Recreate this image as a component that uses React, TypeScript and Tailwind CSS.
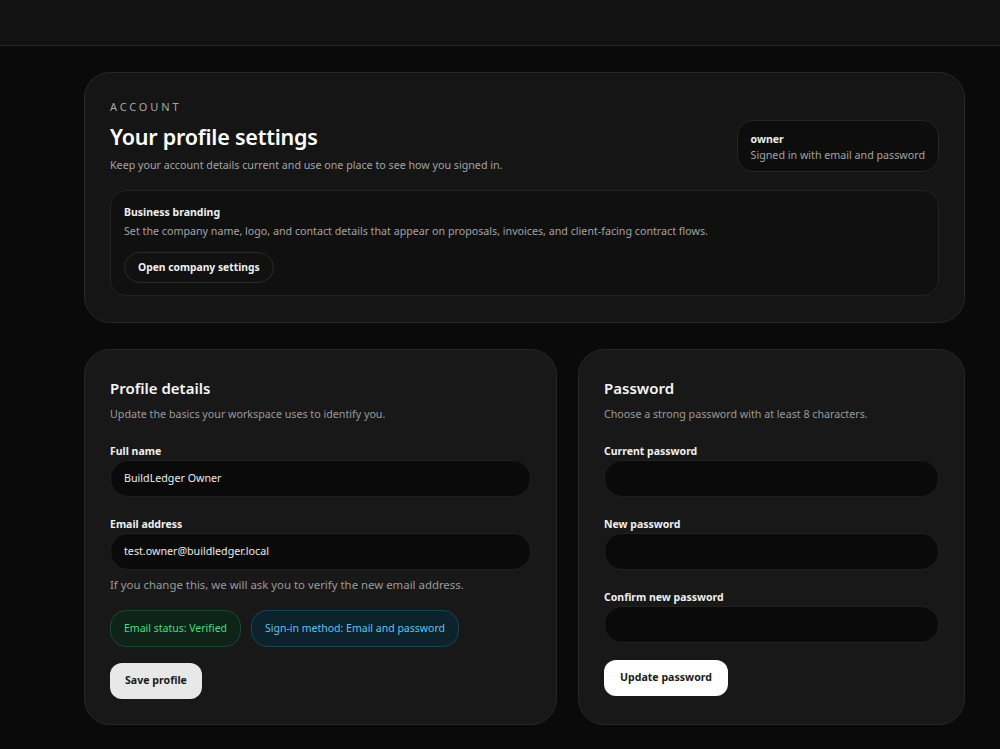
import React from "react";

const font = { fontFamily: '"Noto Sans", "Open Sans", sans-serif' };

function Field({ label, value }: { label: string; value?: string }) {
  return (
    <div className="flex flex-col">
      <label className="text-[10.5px] font-bold text-[#f0f0f0] leading-[14px] mb-[2px]">{label}</label>
      <div className="h-[37px] rounded-[18px] bg-[#0a0a0a] border border-[#202020] flex items-center px-[13px] text-[10.7px] text-[#eaeaea]">
        {value}
      </div>
    </div>
  );
}

export default function App() {
  return (
    <div style={font} className="min-h-[749px] bg-[#0a0a0a] text-white">
      <div className="h-[46px] bg-[#121212] border-b border-[#262626]" />
      <div className="pl-[84px] pr-[35px] pt-[26px] pb-[24px] flex flex-col gap-[26px]">
        <section className="rounded-[26px] bg-[#151515] border border-[#272727] px-[25px] pt-[27px] pb-[26px]">
          <div className="flex justify-between items-start">
            <div>
              <div className="text-[11px] tracking-[0.26em] text-[#a8a8a8] leading-[14px]">ACCOUNT</div>
              <h1 className="text-[21.5px] font-semibold leading-[30px] mt-[8px] tracking-[-0.01em]">Your profile settings</h1>
              <p className="text-[10.7px] text-[#a3a3a3] mt-[5px] leading-[16px]">
                Keep your account details current and use one place to see how you signed in.
              </p>
            </div>
            <div className="mt-[20px] rounded-[16px] bg-[#0d0d0d] border border-[#242424] px-[13px] pt-[11px] pb-[8px]">
              <div className="text-[10.5px] font-bold text-[#eeeeee] leading-[14px]">owner</div>
              <div className="text-[10.7px] text-[#a3a3a3] leading-[16px] mt-[1px]">Signed in with email and password</div>
            </div>
          </div>
          <div className="mt-[17px] rounded-[16px] bg-[#101010] border border-[#232323] px-[13px] pt-[14px] pb-[12px]">
            <div className="text-[10.5px] font-bold text-[#f0f0f0] leading-[14px]">Business branding</div>
            <p className="text-[10.7px] text-[#a3a3a3] mt-[4px] leading-[16px]">
              Set the company name, logo, and contact details that appear on proposals, invoices, and client-facing contract flows.
            </p>
            <button className="mt-[13px] h-[31px] px-[13px] rounded-full border border-[#2a2a2a] bg-[#111111] text-[10.3px] font-bold text-[#f0f0f0]">
              Open company settings
            </button>
          </div>
        </section>

        <div className="grid grid-cols-[11fr_9fr] gap-[21px]">
          <section className="rounded-[26px] bg-[#181818] border border-[#272727] px-[25px] pt-[27px] pb-[25px]">
            <h2 className="text-[15px] font-semibold leading-[22px] text-[#f5f5f5]">Profile details</h2>
            <p className="text-[10.7px] text-[#9a9a9a] mt-[7px] leading-[16px]">Update the basics your workspace uses to identify you.</p>
            <div className="mt-[22px] flex flex-col gap-[20px]">
              <Field label="Full name" value="BuildLedger Owner" />
              <Field label="Email address" value="test.owner@buildledger.local" />
            </div>
            <p className="text-[11.4px] text-[#9a9a9a] mt-[7px] leading-[16px]">If you change this, we will ask you to verify the new email address.</p>
            <div className="flex gap-[10px] mt-[17px]">
              <span className="h-[37px] px-[13px] rounded-[16px] bg-[#0f2418] border border-[#184a2f] text-[#4ade80] text-[10.5px] flex items-center whitespace-nowrap">Email status: Verified</span>
              <span className="h-[37px] px-[13px] rounded-[16px] bg-[#0c222c] border border-[#15465a] text-[#60c3ee] text-[10.5px] flex items-center whitespace-nowrap">Sign-in method: Email and password</span>
            </div>
            <button className="mt-[16px] h-[36px] px-[15px] rounded-[12px] bg-[#e8e8e8] text-[#1a1a1a] text-[10.6px] font-bold">Save profile</button>
          </section>

          <section className="rounded-[26px] bg-[#181818] border border-[#272727] px-[25px] pt-[27px] pb-[25px]">
            <h2 className="text-[15px] font-semibold leading-[22px] text-[#f5f5f5]">Password</h2>
            <p className="text-[10.7px] text-[#9a9a9a] mt-[7px] leading-[16px]">Choose a strong password with at least 8 characters.</p>
            <div className="mt-[22px] flex flex-col gap-[20px]">
              <Field label="Current password" />
              <Field label="New password" />
              <Field label="Confirm new password" />
            </div>
            <button className="mt-[17px] h-[36px] px-[16px] rounded-[12px] bg-white text-[#1a1a1a] text-[10.6px] font-bold">Update password</button>
          </section>
        </div>
      </div>
    </div>
  );
}
